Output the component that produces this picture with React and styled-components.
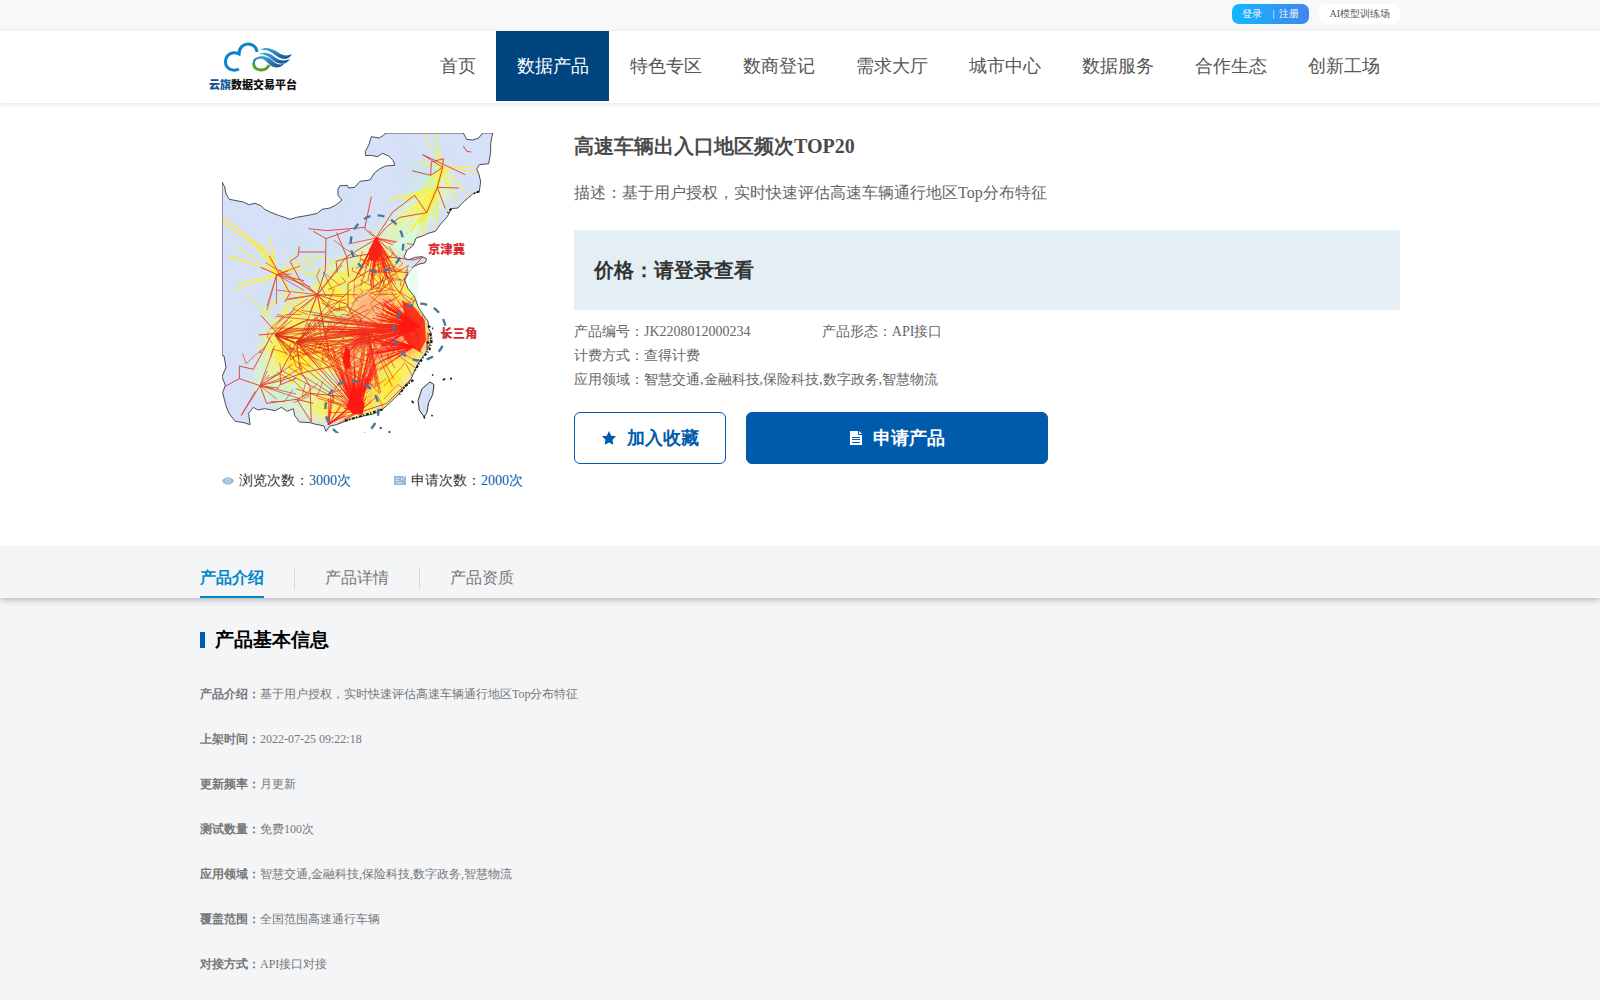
import React, { useState } from "react";
import styled, { createGlobalStyle } from "styled-components";

const navItems = [
  "首页",
  "数据产品",
  "特色专区",
  "数商登记",
  "需求大厅",
  "城市中心",
  "数据服务",
  "合作生态",
  "创新工场",
];

const tabs = ["产品介绍", "产品详情", "产品资质"];

const basicInfo = [
  { label: "产品介绍：", value: "基于用户授权，实时快速评估高速车辆通行地区Top分布特征" },
  { label: "上架时间：", value: "2022-07-25 09:22:18" },
  { label: "更新频率：", value: "月更新" },
  { label: "测试数量：", value: "免费100次" },
  { label: "应用领域：", value: "智慧交通,金融科技,保险科技,数字政务,智慧物流" },
  { label: "覆盖范围：", value: "全国范围高速通行车辆" },
  { label: "对接方式：", value: "API接口对接" },
];

// small seeded generator so the routes on the map are the same on each render
const seeded = (seed) => () => {
  seed = (seed * 16807) % 2147483647;
  return seed / 2147483647;
};

// routes that leave a hub inside an angle range (degrees, clockwise from east)
const fan = (x, y, count, from, to, min, max, seed) => {
  const rnd = seeded(seed);
  let d = "";
  for (let i = 0; i < count; i++) {
    const a = ((from + (to - from) * rnd()) * Math.PI) / 180;
    const r = min + (max - min) * rnd();
    d += `M${x} ${y}L${Math.round(x + Math.cos(a) * r)} ${Math.round(y + Math.sin(a) * r)}`;
  }
  return d;
};

// short routes between random places of an elliptic area
const mesh = (cx, cy, rx, ry, count, len, seed) => {
  const rnd = seeded(seed);
  let d = "";
  for (let i = 0; i < count; i++) {
    const a = rnd() * Math.PI * 2;
    const r = Math.sqrt(rnd());
    const x = Math.round(cx + Math.cos(a) * rx * r);
    const y = Math.round(cy + Math.sin(a) * ry * r);
    d += `M${x} ${y}l${Math.round((rnd() - 0.5) * len)} ${Math.round((rnd() - 0.5) * len)}`;
    d += `l${Math.round((rnd() - 0.5) * len)} ${Math.round((rnd() - 0.5) * len)}`;
  }
  return d;
};

const land =
  "M66 186L74 200L78 222L88 238L104 241L130 246L146 254L165 250L183 257L194 268L212 277L235 286L254 292L270 298L290 292L330 285L352 280L366 268L390 264L408 255L426 240L414 226L414 208L420 197L442 196L446 204L464 202L480 184L510 180L524 158L540 146L556 138L584 136L580 122L566 108L548 100L532 110L514 106L497 107L496 94L506 76L514 50L538 54L550 46L558 39L790 39L800 58L818 60L836 54L848 39L878 39L872 70L872 98L866 131L838 134L830 148L836 160L842 184L838 214L818 222L806 232L790 246L774 264L754 266L742 290L722 312L706 334L684 340L668 348L648 354L640 376L620 392L612 412L624 420L646 412L666 410L680 416L676 428L658 432L640 440L624 462L614 480L624 506L644 530L654 560L672 588L684 604L686 626L694 640L690 672L676 700L656 728L644 752L632 780L616 800L596 822L572 846L548 868L520 882L490 888L450 898L410 914L390 918L378 934L372 918L344 912L330 908L298 906L284 886L280 866L262 874L244 862L226 872L194 866L174 870L160 862L146 880L150 914L132 908L106 904L88 882L78 858L68 818L76 796L66 770L78 742L72 708L66 706Z";

const GlobalStyle = createGlobalStyle`
  * {
    box-sizing: border-box;
  }
  body {
    margin: 0;
    background: #f3f5f7;
    color: #555;
    font-family: "Liberation Serif", serif;
    font-size: 14px;
  }
  h1, h2, h3, p, ul, dl, dd {
    margin: 0;
    padding: 0;
    font-size: inherit;
  }
  ul {
    list-style: none;
  }
  a {
    color: inherit;
    text-decoration: none;
  }
  button {
    font-family: inherit;
    cursor: pointer;
  }
`;

const Logo = () => (
  <svg width="104" height="52" viewBox="0 0 104 52" role="img" aria-label="云旗数据交易平台">
    <defs>
      <linearGradient id="wing" x1="0" y1="0" x2="1" y2="1">
        <stop offset="0" stopColor="#3fb0dc" />
        <stop offset="1" stopColor="#15498f" />
      </linearGradient>
      <linearGradient id="flag" x1="0" y1="0" x2="1" y2="0">
        <stop offset="0" stopColor="#15498f" />
        <stop offset="1" stopColor="#2f9bd6" />
      </linearGradient>
    </defs>
    <path
      d="M37 29C31 32 23.500 29 23.500 22C23.500 14 31 11 37 14C37 1 54 1 55 12"
      fill="none"
      stroke="#0d83c9"
      strokeWidth="3"
    />
    <path d="M52 24C51 17 60 16 66 20" fill="none" stroke="#1686c6" strokeWidth="2" />
    <path d="M51.500 23C52 32 64 32 67 25" fill="none" stroke="#56a32c" strokeWidth="3" />
    <g fill="url(#wing)">
      <path d="M58 10C64 6 71 9 77 13C81 16 86 16 90 14C87 20 81 20 76 17C70 13 66 9 58 10Z" />
      <path d="M57 14C64 11 69 14 74 18C78 21 84 21 88 19C84 25 77 25 72 21C67 17 64 14 57 14Z" />
      <path d="M56 17C63 15 68 18 72 22C75 25 80 25 83 23C78 29 72 28 68 25C64 21 61 18 56 17Z" />
    </g>
    <text
      x="7"
      y="49"
      fontSize="11"
      fontWeight="900"
      fontFamily="'Noto Sans CJK SC', sans-serif"
      fill="#111"
    >
      <tspan fill="url(#flag)">云旗</tspan>数据交易平台
    </text>
  </svg>
);

const RouteMap = () => (
  <svg width="300" height="300" viewBox="66 39 900 900" role="img" aria-label="高速车辆通行地区分布">
    <defs>
      <clipPath id="land">
        <path d={land} />
      </clipPath>
      <filter id="soft" x="-20%" y="-20%" width="140%" height="140%">
        <feGaussianBlur stdDeviation="14" />
      </filter>
    </defs>
    <path d={land} fill="#d6e0f6" />
    <g clipPath="url(#land)">
      <g filter="url(#soft)">
        <path
          d="M730 120L770 200L700 290L640 390L570 430L640 470L690 640L640 780L520 880L350 910L230 860L160 800L190 640L330 520L400 430L520 350L600 270L690 170Z"
          fill="#dcf3c8"
        />
        <path
          d="M700 190L720 210L690 270L640 290L650 250ZM420 450L540 380L640 470L690 640L640 760L560 860L460 900L350 900L330 780L230 740L190 650L260 600L340 520Z"
          fill="#ffee44"
          opacity="0.8"
        />
        <path d="M470 640L600 560L670 600L670 690L540 720L510 850L440 860L420 700Z" fill="#ff8b60" />
        <path d="M470 500L600 520L640 600L520 640L450 600Z" fill="#ffb377" />
        <ellipse cx="385" cy="600" rx="70" ry="28" fill="#c8f2a8" />
        <ellipse cx="380" cy="790" rx="46" ry="36" fill="#cdf3cc" />
        <ellipse cx="260" cy="820" rx="60" ry="30" fill="#c9f2dc" />
        <ellipse cx="570" cy="790" rx="40" ry="30" fill="#ffe838" />
        <ellipse cx="270" cy="710" rx="46" ry="34" fill="#ffe52f" />
      </g>
      <g fill="none">
        <path
          d={mesh(420, 560, 250, 270, 80, 190, 51) + fan(700, 200, 24, 80, 290, 60, 180, 7)}
          stroke="#b8f3df"
          strokeWidth="2"
        />
        <path
          d={
            mesh(440, 640, 240, 230, 130, 160, 9) +
            fan(728, 142, 14, 0, 360, 50, 140, 4) +
            fan(710, 205, 16, 90, 170, 70, 200, 18) +
            fan(232, 464, 15, 150, 400, 50, 190, 8)
          }
          stroke="#fdf52e"
          strokeWidth="3"
        />
        <path d="M66 288L190 388L232 464M66 306L208 405M86 408L186 442L300 480M210 405L270 520" stroke="#ffe834" strokeWidth="4" />
        <path d="M728 142L710 205L680 278L626 350" stroke="#f5ed38" strokeWidth="12" />
        <path
          d={
            mesh(500, 650, 190, 200, 76, 120, 33) +
            mesh(540, 450, 90, 80, 36, 80, 12) +
            mesh(290, 700, 110, 110, 26, 100, 44)
          }
          stroke="#e2401c"
          strokeWidth="2"
        />
        <path
          d={
            fan(352, 524, 14, 0, 360, 50, 210, 11) +
            fan(290, 666, 26, -50, 60, 60, 250, 27) +
            fan(225, 645, 34, -50, 60, 30, 120, 71) +
            fan(180, 797, 10, -70, 40, 40, 130, 15) +
            fan(230, 464, 8, -20, 120, 30, 120, 19)
          }
          stroke="#e2301c"
          strokeWidth="2"
        />
        <path
          d="M728 142L668 104L796 164M728 142L730 116L694 126L692 166L636 152M692 166L728 142L712 202L680 278L644 226L578 276L530 350M712 202L736 266M712 202L776 204M790 78L800 94L814 96M680 278L600 292L560 320L530 356M514 230L494 326L524 352M326 326L380 332L494 322M340 334L378 356L376 450L352 524M378 356L450 330M410 338L440 410L446 470M298 380L294 408L270 424L300 480L352 524M294 396L376 396M352 524L440 410L524 360M182 442L232 464L312 482M208 408L270 520L254 546M352 524L274 586L214 646L160 748L118 738L118 776L180 797L200 850M66 804L118 776M182 586L232 640L176 645M124 886L180 797L240 760L290 666L300 750L330 800L334 906M124 886L166 814M180 797L250 780L310 758L410 736M240 758L242 794L290 774M200 850L290 838L340 850M352 524L400 568L440 560L530 610M352 524L440 552L480 630M676 410L640 420L560 410L524 370M664 416L624 458L548 450M624 458L600 520L548 450M600 520L660 580M334 906L290 838L330 820L430 830M686 640L680 700L640 770L560 850L470 880M408 424L460 410L520 400M408 424L412 458M444 560L444 490L510 450"
          stroke="#dd4a3a"
          strokeWidth="3"
        />
        <path
          d={
            fan(528, 354, 34, 60, 120, 50, 170, 5) +
            fan(528, 354, 12, 10, 170, 60, 180, 6) +
            fan(650, 620, 80, 150, 235, 40, 140, 14) +
            fan(660, 620, 20, 172, 214, 90, 170, 3) +
            fan(640, 680, 30, 145, 200, 50, 150, 36) +
            fan(465, 865, 44, 246, 300, 60, 190, 22) +
            fan(476, 876, 34, 150, 335, 40, 100, 28) +
            fan(385, 914, 14, 270, 340, 40, 110, 88)
          }
          stroke="#ff1712"
          strokeWidth="2"
        />
        <path
          d={
            fan(465, 865, 26, 195, 300, 90, 260, 62) +
            fan(650, 630, 34, 165, 190, 170, 440, 23) +
            fan(505, 640, 36, 30, 200, 40, 210, 52)
          }
          stroke="#f32a1e"
          strokeWidth="2"
        />
        <path
          d="M606 540L640 560L674 600L678 660L660 696L630 680L610 650L594 620L614 590Z"
          fill="#ff1712"
          opacity="0.85"
        />
        <path d="M528 350L546 394L530 424L506 420L508 388Z" fill="#fb2018" />
        <path d="M462 780L472 820L494 850L488 884L458 882L440 860L450 830Z" fill="#ff1712" />
        <path d="M436 680L450 690L450 740L440 750L428 720Z" fill="#ff1712" />
      </g>
    </g>
    <path d={land} fill="none" stroke="#4a4d58" strokeWidth="3" strokeLinejoin="round" />
    <path
      d="M838 214L818 222M754 266L742 280M690 640L696 660L688 690L670 712L654 736L644 754M640 780L614 800L598 824M548 868L490 886L430 904M684 618L704 628M680 666L692 672"
      fill="none"
      stroke="#111"
      strokeWidth="6"
      strokeDasharray="8 6 3 5"
    />
    <path
      d="M690 786L702 794L698 824L686 848L680 880L672 890L658 870L654 842L666 806Z"
      fill="#d6e0f6"
      stroke="#333"
      strokeWidth="3"
    />
    <path
      d="M635 842l6 8M728 780l8-4M750 776l6 0M672 888l2 8M694 886l4 2M540 922l5 4M566 934l4 4M696 764l4 2"
      stroke="#222"
      strokeWidth="5"
    />
    <path d="M624 440L650 450L656 480L652 540L626 500Z" fill="#e0fbe6" opacity="0.7" />
    <path d="M576 376L640 330L660 300L646 356L620 370L612 400Z" fill="#d9fae1" />
    <g fill="none" stroke="#42799d" strokeWidth="7" strokeDasharray="21 22">
      <ellipse cx="531" cy="371" rx="79" ry="85" />
      <ellipse cx="659" cy="636" rx="79" ry="85" />
      <ellipse cx="456" cy="867" rx="80" ry="85" />
    </g>
    <g fill="#d92a31" fontFamily="'Noto Sans CJK SC', sans-serif" fontWeight="900" fontSize="37">
      <text x="684" y="403">京津冀</text>
      <text x="721" y="653">长三角</text>
    </g>
  </svg>
);

const EyeIcon = () => (
  <svg width="12" height="12" viewBox="0 0 12 12" aria-hidden="true">
    <path d="M0 6C3 1 9 1 12 6C9 11 3 11 0 6Z" fill="#96b9d9" />
    <circle cx="6" cy="6" r="2" fill="none" stroke="#d5e4f1" />
  </svg>
);

const FormIcon = () => (
  <svg width="12" height="12" viewBox="0 0 12 12" aria-hidden="true">
    <path d="M0 1H12V10H0Z" fill="#96b9d9" />
    <path d="M2 3.500H5M2 5.500H5M2 8H9" stroke="#d5e4f1" />
    <path d="M7 5L11 1" stroke="#fff" strokeWidth="1" />
  </svg>
);

const StarIcon = () => (
  <svg width="16" height="16" viewBox="0 0 16 16" aria-hidden="true">
    <path
      d="M8 1L10.200 5.700L15 6.300L11.500 9.700L12.400 14.800L8 12.400L3.600 14.800L4.500 9.700L1 6.300L5.800 5.700Z"
      fill="currentColor"
    />
  </svg>
);

const FileIcon = () => (
  <svg width="14" height="16" viewBox="0 0 14 16" aria-hidden="true">
    <path d="M1 1H9V5H13V15H1Z" fill="currentColor" />
    <path d="M10 1L13 4H10Z" fill="currentColor" />
    <path d="M3 7.500H11M3 9.500H11M3 12.500H11" stroke="#005bac" />
  </svg>
);

const App = () => {
  const [activeTab, setActiveTab] = useState(0);

  return (
    <>
      <GlobalStyle />
      <TopBar>
        <TopInner>
          <LoginPill>
            <a href="#login">登录</a>
            <span>|</span>
            <a href="#register">注册</a>
          </LoginPill>
          <TrainPill href="#train">AI模型训练场</TrainPill>
        </TopInner>
      </TopBar>
      <Header>
        <HeaderInner>
          <LogoLink href="#home">
            <Logo />
          </LogoLink>
          <Nav>
            {navItems.map((item, index) => (
              <NavLink key={item} href="#nav" $active={index === 1}>
                {item}
              </NavLink>
            ))}
          </Nav>
        </HeaderInner>
      </Header>
      <Product>
        <ProductInner>
          <Preview>
            <RouteMap />
            <Counters>
              <Counter>
                <EyeIcon />
                <span>
                  浏览次数：<em>3000次</em>
                </span>
              </Counter>
              <Counter>
                <FormIcon />
                <span>
                  申请次数：<em>2000次</em>
                </span>
              </Counter>
            </Counters>
          </Preview>
          <Info>
            <Title>高速车辆出入口地区频次TOP20</Title>
            <Description>
              描述：基于用户授权，实时快速评估高速车辆通行地区Top分布特征
            </Description>
            <Price>价格：请登录查看</Price>
            <Specs>
              <li>产品编号：JK2208012000234</li>
              <li>产品形态：API接口</li>
              <Wide>计费方式：查得计费</Wide>
              <Wide>应用领域：智慧交通,金融科技,保险科技,数字政务,智慧物流</Wide>
            </Specs>
            <Actions>
              <ActionButton type="button">
                <StarIcon />
                加入收藏
              </ActionButton>
              <ActionButton type="button" $primary>
                <FileIcon />
                申请产品
              </ActionButton>
            </Actions>
          </Info>
        </ProductInner>
      </Product>
      <TabBar>
        <TabList role="tablist">
          {tabs.map((tab, index) => (
            <TabItem key={tab}>
              <Tab
                type="button"
                role="tab"
                aria-selected={activeTab === index}
                $active={activeTab === index}
                onClick={() => setActiveTab(index)}
              >
                {tab}
              </Tab>
            </TabItem>
          ))}
        </TabList>
      </TabBar>
      <Detail>
        <SectionTitle>产品基本信息</SectionTitle>
        <dl>
          {basicInfo.map((row) => (
            <DetailRow key={row.label}>
              <dt>{row.label}</dt>
              <dd>{row.value}</dd>
            </DetailRow>
          ))}
        </dl>
      </Detail>
    </>
  );
};

const Container = styled.div`
  width: 100%;
  max-width: 1200px;
  margin: 0 auto;
`;

const TopBar = styled.div`
  background: #f6f8fa;
  padding: 4px 0 7px;
`;

const TopInner = styled(Container)`
  display: flex;
  justify-content: flex-end;
  gap: 10px;
  font-size: 10px;
  line-height: 20px;
`;

const LoginPill = styled.div`
  display: flex;
  padding: 0 10px;
  border-radius: 7px;
  color: white;
  background: linear-gradient(90deg, #12b7ff, #4285ec);

  span {
    margin: 0 5px 0 10px;
  }
`;

const TrainPill = styled.a`
  padding: 0 10px;
  border-radius: 7px;
  background: white;
`;

const Header = styled.header`
  position: relative;
  background: white;
  box-shadow: 0 1px 4px rgba(0, 0, 0, 0.12);
`;

const HeaderInner = styled(Container)`
  display: flex;
  justify-content: space-between;
  padding-bottom: 2px;
`;

const LogoLink = styled.a`
  display: flex;
  align-items: center;
  padding-left: 2px;
`;

const Nav = styled.nav`
  display: flex;
`;

const NavLink = styled.a`
  padding: 0 20px 0 21px;
  font-size: 18px;
  line-height: 70px;
  color: ${({ $active }) => ($active ? "white" : "#555")};
  background: ${({ $active }) => ($active ? "#00457f" : "transparent")};
`;

const Product = styled.section`
  background: white;
  padding: 30px 0 55px;
`;

const ProductInner = styled(Container)`
  display: flex;
  align-items: flex-start;
`;

const Preview = styled.div`
  flex: 0 0 374px;
  padding-left: 22px;

  > svg {
    display: block;
  }
`;

const Counters = styled.div`
  display: flex;
  gap: 43px;
  margin-top: 38px;
`;

const Counter = styled.div`
  display: flex;
  align-items: center;
  gap: 5px;
  line-height: 20px;
  color: #333;

  em {
    font-style: normal;
    color: #005bac;
  }
`;

const Info = styled.div`
  flex: 1;
  min-width: 0;
`;

const Title = styled.h1`
  font-size: 20px;
  line-height: 26px;
  color: #4a4a4a;
`;

const Description = styled.p`
  margin: 22px 0 26px;
  font-size: 16px;
  line-height: 23px;
  color: #666;
`;

const Price = styled.h2`
  padding: 0 20px;
  font-size: 20px;
  line-height: 80px;
  color: #333;
  background: #e3eff4;
`;

const Specs = styled.ul`
  display: grid;
  grid-template-columns: 30% 1fr;
  margin: 10px 0 20px;
  line-height: 24px;
  color: #666;
`;

const Wide = styled.li`
  grid-column: 1 / -1;
`;

const Actions = styled.div`
  display: flex;
  gap: 20px;
`;

const ActionButton = styled.button`
  display: flex;
  align-items: center;
  justify-content: center;
  gap: 10px;
  width: ${({ $primary }) => ($primary ? "302px" : "152px")};
  height: 52px;
  border: 1px solid #005bac;
  border-radius: 6px;
  font-size: 18px;
  font-weight: bold;
  color: ${({ $primary }) => ($primary ? "white" : "#005bac")};
  background: ${({ $primary }) => ($primary ? "#005bac" : "white")};
`;

const TabBar = styled.div`
  position: relative;
  padding-top: 12px;
  background: #f3f5f7;
  box-shadow: 0 2px 6px rgba(0, 0, 0, 0.25);
  clip-path: inset(0 0 -12px 0);
`;

const TabList = styled(Container)`
  display: flex;
`;

const TabItem = styled.div`
  display: flex;
  align-items: center;

  & + &::before {
    content: "";
    width: 1px;
    height: 21px;
    margin: 0 30px;
    background: #d8dade;
  }
`;

const Tab = styled.button`
  height: 40px;
  padding: 2px 0 0;
  border: none;
  border-bottom: 2px solid ${({ $active }) => ($active ? "#0085d0" : "transparent")};
  background: none;
  font-size: 16px;
  font-weight: ${({ $active }) => ($active ? "bold" : "normal")};
  color: ${({ $active }) => ($active ? "#0085d0" : "#777")};
`;

const Detail = styled(Container)`
  padding-top: 30px;
`;

const SectionTitle = styled.h3`
  display: flex;
  align-items: center;
  gap: 10px;
  margin-bottom: 20px;
  font-size: 19px;
  line-height: 24px;
  color: black;

  &::before {
    content: "";
    width: 5px;
    height: 16px;
    background: #005bac;
  }
`;

const DetailRow = styled.div`
  display: flex;
  border-bottom: 1px dashed #eef0f3;
  font-size: 12px;
  line-height: 44px;
  color: #777;

  dt {
    font-weight: bold;
  }
`;

export default App;
